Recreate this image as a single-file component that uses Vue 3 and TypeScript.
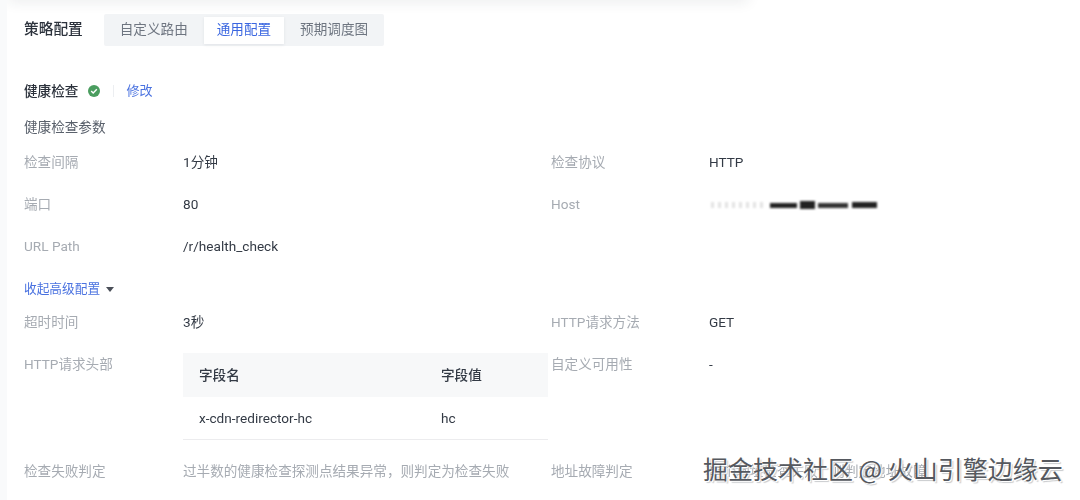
<script setup lang="ts">
interface Item { label: string; value: string; kind?: string }
const tabs: string[] = ['自定义路由', '通用配置', '预期调度图']
const basic: Item[] = [
  { label: '检查间隔', value: '1分钟' },
  { label: '检查协议', value: 'HTTP' },
  { label: '端口', value: '80' },
  { label: 'Host', value: '', kind: 'blur' },
  { label: 'URL Path', value: '/r/health_check' },
]
</script>

<template>
  <div class="page">
    <div class="soft">
      <div class="top-shadow"></div>
      <div class="left-edge"></div>
      <div class="content">
        <div class="head">
          <span class="head-title">策略配置</span>
          <div class="tabs">
            <span v-for="t in tabs" :key="t" class="tab" :class="{ active: t === '通用配置' }">{{ t }}</span>
          </div>
        </div>

        <div class="check-row">
          <span class="check-title">健康检查</span>
          <svg class="ok" width="12" height="12" viewBox="0 0 12 12">
            <circle cx="6" cy="6" r="6" fill="#4a9d5f" />
            <path d="M3.2 6.1 5.2 8 8.8 4.3" fill="none" stroke="#fff" stroke-width="1.4" />
          </svg>
          <span class="divider"></span>
          <span class="link edit">修改</span>
        </div>
        <div class="sub-title">健康检查参数</div>

        <div class="grid rows-a">
          <template v-for="i in basic" :key="i.label">
            <span class="label">{{ i.label }}</span>
            <span v-if="i.kind !== 'blur'" class="value">{{ i.value }}</span>
            <span v-else class="smudge">
              <i class="s1"></i><i class="s2"></i><i class="s3"></i><i class="s4"></i><i class="s5"></i>
            </span>
          </template>
        </div>

        <div class="collapse">
          <span class="link">收起高级配置</span>
          <span class="caret"></span>
        </div>

        <div class="grid adv">
          <span class="label">超时时间</span>
          <span class="value">3秒</span>
          <span class="label">HTTP请求方法</span>
          <span class="value">GET</span>

          <span class="label">HTTP请求头部</span>
          <div class="table">
            <div class="tr th"><span>字段名</span><span>字段值</span></div>
            <div class="tr td"><span>x-cdn-redirector-hc</span><span>hc</span></div>
          </div>
          <span class="label">自定义可用性</span>
          <span class="value">-</span>

          <span class="label">检查失败判定</span>
          <span class="muted">过半数的健康检查探测点结果异常，则判定为检查失败</span>
          <span class="label">地址故障判定</span>
          <span class="muted">单个地址检查失败，则判定地址故障</span>
        </div>
      </div>
    </div>
    <div class="watermark">掘金技术社区 @ 火山引擎边缘云</div>
  </div>
</template>

<style>
html, body { margin: 0; background: #fff; }
</style>

<style scoped>
.page {
  position: relative;
  width: 1080px;
  height: 500px;
  overflow: hidden;
  background: #fff;
  font-family: Roboto, "Noto Sans CJK SC", sans-serif;
  font-size: 13.6px;
  line-height: 20px;
  color: #333a45;
}
.soft {
  height: 500px;
  filter: blur(0.35px);
}
.top-shadow {
  position: absolute;
  left: 8px;
  top: -14px;
  width: 740px;
  height: 14px;
  box-shadow: 0 2px 14px rgba(30, 40, 60, 0.09);
}
.left-edge {
  position: absolute;
  left: 0;
  top: 0;
  width: 7px;
  height: 500px;
  background: #f9fafb;
}
.content {
  padding: 14px 0 0 24px;
}
.head {
  display: flex;
  align-items: center;
  gap: 21px;
}
.head-title {
  font-size: 14.7px;
  font-weight: 500;
  color: #2c323c;
  padding-bottom: 2px;
}
.tabs {
  display: flex;
  gap: 2px;
  padding: 2px;
  background: #f2f4f6;
  height: 28px;
  align-items: center;
  border-radius: 2px;
}
.tab {
  height: 27px;
  line-height: 25px;
  padding: 0 14px;
  color: #6e7580;
}
.tab.active {
  padding: 0 13px;
  background: #fff;
  color: #3a66e0;
  box-shadow: 0 1px 3px rgba(30, 40, 60, 0.08);
}
.check-row {
  display: flex;
  align-items: center;
  margin-top: 35px;
  height: 20px;
}
.check-title {
  font-weight: 500;
  color: #2c323c;
}
.ok { margin-left: 10px; }
.divider {
  width: 1px;
  height: 12px;
  margin: 0 12.5px;
  background: #eceef1;
}
.link { color: #4a72e0; }
.edit { font-size: 13px; }
.sub-title {
  margin-top: 16px;
  color: #5a616c;
}
.grid {
  display: grid;
  grid-template-columns: 159px 368px 158px 1fr;
}
.rows-a {
  margin-top: 15px;
  row-gap: 22px;
}
.label { color: #a6abb2; }
.value { color: #333a45; }
.muted { color: #a6abb2; white-space: nowrap; }
.smudge {
  display: flex;
  align-items: center;
  box-sizing: border-box;
  height: 20px;
  padding-top: 2px;
  margin-left: 2px;
}
.smudge i {
  display: block;
  height: 6px;
  filter: blur(1px);
}
.s1 { width: 52px; background: repeating-linear-gradient(90deg, #e2e2e2 0 3px, #fff 3px 7px); }
.s2 { width: 27px; background: #222; margin-left: 7px; height: 5px !important; }
.s3 { width: 15px; background: #222; margin-left: 3px; height: 8px !important; }
.s4 { width: 30px; background: #333; margin-left: 3px; height: 5px !important; }
.s5 { width: 25px; background: #222; margin-left: 4px; }
.collapse {
  display: flex;
  align-items: center;
  gap: 6px;
  margin-top: 23px;
  font-size: 12.7px;
}
.caret {
  width: 0;
  height: 0;
  border-left: 4.5px solid transparent;
  border-right: 4.5px solid transparent;
  border-top: 5px solid #4a4f58;
}
.adv {
  margin-top: 13px;
  align-items: start;
  row-gap: 22px;
}
.adv > .table { margin-top: -1px; margin-bottom: -1px; }
.table {
  width: 365px;
}
.tr {
  display: grid;
  grid-template-columns: 242px 1fr;
  padding-left: 16px;
  align-items: center;
}
.th {
  height: 44px;
  background: #f7f8f9;
  font-weight: 500;
}
.td {
  height: 43px;
  box-sizing: border-box;
  border-bottom: 1px solid #ececee;
}
.watermark {
  position: absolute;
  left: 703px;
  top: 453px;
  font-size: 25px;
  line-height: 30px;
  white-space: nowrap;
  color: #55585e;
  font-family: "Noto Sans CJK SC", sans-serif;
  text-shadow: 1px 1px 0 #fff, 2px 2px 1px #c9cbce;
}
</style>
